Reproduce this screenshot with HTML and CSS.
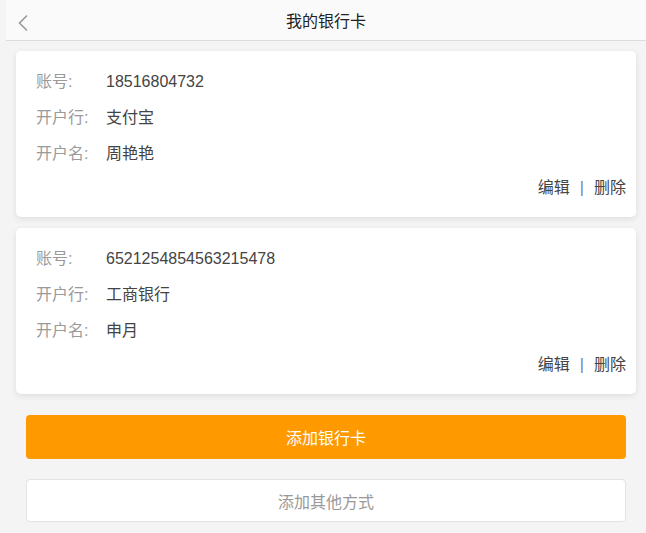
FILE: index.html
```html
<!DOCTYPE html>
<html lang="zh-CN">
<head>
    <meta charset="UTF-8">
    <meta name="viewport" content="width=device-width, initial-scale=1.0">
    <title>我的银行卡</title>
    <link rel="stylesheet" href="styles.css">
</head>
<body>
    <div class="page">
        <!-- Cabeçalho -->
        <div class="header">
            <span class="back">
                <svg width="12" height="18" viewBox="0 0 12 18">
                    <polyline points="10,1.5 2.5,9 10,16.5" fill="none" stroke="#9a9a9a" stroke-width="1.6"/>
                </svg>
            </span>
            <h1 class="title">我的银行卡</h1>
        </div>

        <!-- Cartões -->
        <div class="card-list">
            <div class="card">
                <div class="row"><span class="label">账号:</span><span class="value">18516804732</span></div>
                <div class="row"><span class="label">开户行:</span><span class="value">支付宝</span></div>
                <div class="row"><span class="label">开户名:</span><span class="value">周艳艳</span></div>
                <div class="actions">
                    <a class="action">编辑</a><span class="sep">|</span><a class="action">删除</a>
                </div>
            </div>
            <div class="card">
                <div class="row"><span class="label">账号:</span><span class="value">6521254854563215478</span></div>
                <div class="row"><span class="label">开户行:</span><span class="value">工商银行</span></div>
                <div class="row"><span class="label">开户名:</span><span class="value">申月</span></div>
                <div class="actions">
                    <a class="action">编辑</a><span class="sep">|</span><a class="action">删除</a>
                </div>
            </div>
        </div>

        <div class="buttons">
            <button class="btn btn-primary">添加银行卡</button>
            <button class="btn btn-plain">添加其他方式</button>
        </div>
    </div>
</body>
</html>
```

FILE: styles.css
```css
/* Base */
body {
    margin: 0;
    background-color: #f4f4f4;
    font-family: "Liberation Sans", "Noto Sans CJK SC", sans-serif;
    color: #333;
}

.page {
    margin-left: 6px;
}

/* Header */
.header {
    height: 40px;
    background-color: #fafafa;
    border-bottom: 1px solid #dcdcdc;
    display: flex;
    align-items: center;
    justify-content: center;
    position: relative;
}

.back {
    position: absolute;
    left: 11px;
    top: 14px;
    display: flex;
}

.title {
    margin: 0;
    font-size: 16px;
    font-weight: normal;
    color: #222;
}

/* Cards */
.card-list {
    padding: 10px 10px 0 10px;
    display: flex;
    flex-direction: column;
    gap: 11px;
}

.card {
    background-color: #fff;
    border-radius: 5px;
    box-shadow: 0 2px 6px rgba(0, 0, 0, 0.09);
    padding: 13px 10px 13px 20px;
}

.row {
    display: flex;
    line-height: 36px;
    font-size: 16px;
}

.label {
    width: 70px;
    color: #9a9a9a;
}

.value {
    color: #444;
}

.actions {
    display: flex;
    justify-content: flex-end;
    line-height: 32px;
    font-size: 16px;
}

.action {
    color: #444;
    cursor: pointer;
}

.sep {
    margin: 0 10px 0 10px;
    color: #6b84ad;
}

/* Buttons */
.buttons {
    padding: 21px 20px 0 20px;
    display: flex;
    flex-direction: column;
    gap: 20px;
}

.btn {
    height: 44px;
    border-radius: 4px;
    font-family: inherit;
    font-size: 16px;
    cursor: pointer;
}

.btn-primary {
    background-color: #ff9900;
    color: #fff;
    border: none;
}

.btn-plain {
    height: 43px;
    background-color: #fff;
    color: #999;
    border: 1px solid #e3e3e3;
}
```
